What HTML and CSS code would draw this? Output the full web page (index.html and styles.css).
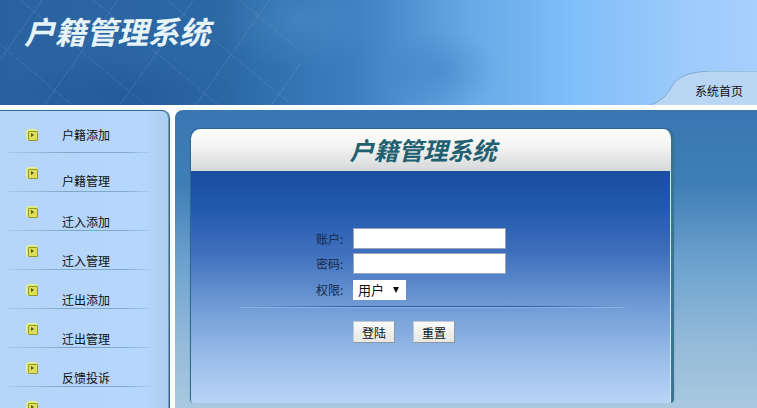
FILE: index.html
```html
<!DOCTYPE html>
<html lang="zh-CN">
<head>
<meta charset="utf-8">
<title>户籍管理系统</title>
<link rel="stylesheet" href="styles.css">
</head>
<body>
<div class="page">
  <header class="header">
    <h1 class="brand">户籍管理系统</h1>
    <div class="tab">
      <svg class="tab-shape" viewBox="0 0 107 34" preserveAspectRatio="none" aria-hidden="true">
        <path d="M0 34 C12 30 17 24 22 15 C28 5 40 1 60 0 L107 0 L107 34 Z" fill="#b9d6f4"/>
        <path d="M0 34 C12 30 17 24 22 15 C28 5 40 1 60 0 L107 0" fill="none" stroke="#7fa9cf" stroke-width="1"/>
      </svg>
      <a class="tab-link">系统首页</a>
    </div>
  </header>
  <div class="content">
    <nav class="sidebar">
      <div class="item item-first"><i class="bullet"></i><span class="label">户籍添加</span></div>
      <div class="item item-second"><i class="bullet"></i><span class="label">户籍管理</span></div>
      <div class="item"><i class="bullet"></i><span class="label">迁入添加</span></div>
      <div class="item"><i class="bullet"></i><span class="label">迁入管理</span></div>
      <div class="item"><i class="bullet"></i><span class="label">迁出添加</span></div>
      <div class="item"><i class="bullet"></i><span class="label">迁出管理</span></div>
      <div class="item"><i class="bullet"></i><span class="label">反馈投诉</span></div>
      <div class="item"><i class="bullet"></i></div>
    </nav>
    <main class="main">
      <section class="panel">
        <div class="panel-title"><h2>户籍管理系统</h2></div>
        <form class="panel-body">
          <div class="row"><label>账户:</label><input class="field" type="text"></div>
          <div class="row"><label>密码:</label><input class="field" type="password"></div>
          <div class="row row-select"><label>权限:</label><div class="select">用户<span class="arrow"></span></div></div>
          <div class="rule"></div>
          <div class="buttons"><button type="button">登陆</button><button type="button">重置</button></div>
        </form>
      </section>
    </main>
  </div>
</div>
</body>
</html>
```
FILE: styles.css
```css
* { box-sizing: border-box; }
html, body { margin: 0; padding: 0; background: #fff; }
body { font-family: "Noto Sans CJK SC", "Liberation Sans", sans-serif; font-size: 12px; color: #111; overflow: hidden; }
.page { width: 757px; height: 408px; overflow: hidden; display: flex; flex-direction: column; }

.header {
  height: 105px; flex: none; display: flex; justify-content: space-between; align-items: flex-end;
  background:
    repeating-linear-gradient(125deg, rgba(255,255,255,0) 0 34px, rgba(150,190,230,.14) 34px 35px, rgba(255,255,255,0) 35px 62px) 0 0 / 300px 105px no-repeat,
    repeating-linear-gradient(40deg, rgba(255,255,255,0) 0 46px, rgba(150,190,230,.11) 46px 47px) 0 0 / 300px 105px no-repeat,
    radial-gradient(60px 40px at 440px 70px, rgba(40,100,170,.28), rgba(40,100,170,0)),
    radial-gradient(90px 50px at 300px 20px, rgba(110,170,225,.25), rgba(110,170,225,0)),
    radial-gradient(120px 40px at 120px 95px, rgba(20,70,130,.3), rgba(20,70,130,0)),
    linear-gradient(90deg, #2a629f 0, #2c68a6 30%, #3b7fc0 47%, #65a9e6 62%, #80bff9 76%, #9ccafb 90%, #a6d0fd 100%);
}
.brand {
  margin: 10px 0 0 24px; align-self: flex-start; font-size: 31px; line-height: 42px; font-weight: 700; font-style: italic;
  color: #e6f3f7; letter-spacing: 0;
}
.tab { position: relative; width: 107px; height: 34px; display: flex; align-items: center; justify-content: flex-end; padding: 5px 14px 0 0; }
.tab-shape { position: absolute; inset: 0; width: 100%; height: 100%; }
.tab-link { position: relative; font-size: 12px; color: #111; }

.content { flex: 1; display: flex; padding-top: 5px; min-height: 0; }

.sidebar {
  width: 170px; flex: none; padding-top: 4px; height: 298px; overflow: hidden;
  background: linear-gradient(90deg, #b4d4f8 0, #b6d7fc 85%, #accfee 100%);
  border-top: 1px solid #2f6f9c; border-right: 1px solid #2b6a94; border-top-right-radius: 8px;
  box-shadow: inset -1px 0 0 #6d9cc0;
}
.item { height: 39px; margin: 0 18px 0 8px; padding-top: 14px; display: flex; align-items: flex-start; position: relative;
  border-bottom: 1px solid transparent; border-image: linear-gradient(90deg, #a9cbe8 0, #7ea8c4 40%, #7ea8c4 80%, #b2d3f5 100%) 1; }
.item:last-child { border-bottom: 0; }
.bullet {
  width: 12px; height: 12px; margin: 0 0 0 18px; flex: none; background: #dbe866; border: 1px solid #e9f29c; border-radius: 3px; position: relative;
}
.bullet::before { content: ""; position: absolute; left: 1px; top: 1px; width: 8px; height: 8px; background: #e0dd5c; border: 1px solid #8f9a35; border-radius: 1px; }
.bullet::after { content: ""; position: absolute; left: 4px; top: 2.5px; border-left: 3px solid #4a5420; border-top: 2.5px solid transparent; border-bottom: 2.5px solid transparent; }
.label { margin-left: 24px; margin-top: 8px; line-height: 16px; color: #111; white-space: nowrap; }
.item-first { height: 38px; }
.item-first .label { margin-top: -2px; }
.item-second .label { margin-top: 6px; }

.main {
  flex: 1; margin-left: 5px; padding: 19px 83px 5px 15px; min-width: 0;
  background: linear-gradient(180deg, #3a77b2 0, #3f7eb6 25%, #6ea3cf 52%, #93bad8 78%, #a9c9e0 100%);
  border-top-left-radius: 8px;
}
.panel { height: 274px; display: flex; flex-direction: column; border-radius: 10px 10px 4px 4px; border-right: 3px solid #3a7590; border-left: 1px solid #2d6b8d; box-shadow: 0 -1px 1px #2a6398; overflow: hidden; }
.panel-title { height: 42px; flex: none; display: flex; align-items: center; justify-content: center; background: linear-gradient(180deg, #fdfdfd 0, #f4f4f3 40%, #d6d8d9 100%); padding-right: 16px; }
.panel-title h2 { margin: 0; font-size: 24.5px; line-height: 36px; font-weight: 700; font-style: italic; color: #1f6170; }
.panel-body {
  flex: 1; padding-top: 55px; display: flex; flex-direction: column; border-right: 1px solid #d7e9ee;
  background: linear-gradient(180deg, #1a4ea3 0, #2059ac 15%, #3f6fbc 35%, #6f9ad5 58%, #9dbfeb 82%, #b8d4f6 100%);
}
.row { height: 25px; display: flex; align-items: center; padding-left: 125px; flex: none; }
.row-select { margin-top: 1px; }
.row label { width: 37px; color: #14284a; }
.field { width: 153px; height: 21px; border: 1px solid #9aa5b8; background: #fff; padding: 0; margin: 0; }
.select { width: 53px; height: 20px; background: #fff; display: flex; align-items: center; padding-left: 5px; gap: 9px; color: #111; font-size: 13px; }
.arrow { width: 0; height: 0; border-top: 6px solid #111; border-left: 3.5px solid transparent; border-right: 3.5px solid transparent; }
.rule { height: 1px; margin: 4px 45px 0 49px; background: linear-gradient(90deg, rgba(46,95,156,0) 0, #2e5f9c 30%, #2e5f9c 75%, rgba(46,95,156,0) 100%); box-shadow: 0 1px 0 rgba(157,192,234,.6); flex: none; }
.buttons { display: flex; gap: 18px; padding-left: 162px; margin-top: 14px; }
button { width: 42px; height: 22px; padding: 0; border: 1px solid #c2c8cd; border-bottom-color: #8d97a3; border-right-color: #8d97a3; background: linear-gradient(180deg, #fbfbfa, #e6e6e2); font: inherit; color: #111; }
```
